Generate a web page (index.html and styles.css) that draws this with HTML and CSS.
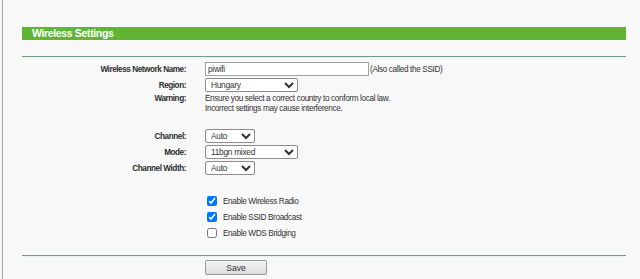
FILE: index.html
```html
<!DOCTYPE html>
<html lang="en">
<head>
  <meta charset="UTF-8" />
  <title>Wireless Settings</title>
  <link rel="stylesheet" href="styles.css">
</head>
<body>
  <div class="frame">
    <div class="title-bar">Wireless Settings</div>
    <div class="rule"></div>

    <form class="settings" onsubmit="return false">
      <div class="row">
        <label class="label" for="ssid">Wireless Network Name:</label>
        <div class="field">
          <input type="text" id="ssid" class="text-input" value="piwifi">
          <span class="hint">(Also called the SSID)</span>
        </div>
      </div>

      <div class="row">
        <label class="label" for="region">Region:</label>
        <div class="field">
          <select id="region" class="sel wide">
            <option>Hungary</option>
          </select>
        </div>
      </div>

      <div class="row warning">
        <span class="label">Warning:</span>
        <div class="field note">
          Ensure you select a correct country to conform local law.<br>
          Incorrect settings may cause interference.
        </div>
      </div>

      <div class="row first-radio">
        <label class="label" for="channel">Channel:</label>
        <div class="field">
          <select id="channel" class="sel narrow"><option>Auto</option></select>
        </div>
      </div>

      <div class="row">
        <label class="label" for="mode">Mode:</label>
        <div class="field">
          <select id="mode" class="sel wide"><option>11bgn mixed</option></select>
        </div>
      </div>

      <div class="row">
        <label class="label" for="width">Channel Width:</label>
        <div class="field">
          <select id="width" class="sel narrow"><option>Auto</option></select>
        </div>
      </div>

      <div class="checks">
        <label class="check"><input type="checkbox" checked> Enable Wireless Radio</label>
        <label class="check"><input type="checkbox" checked> Enable SSID Broadcast</label>
        <label class="check"><input type="checkbox"> Enable WDS Bridging</label>
      </div>
    </form>

    <div class="rule bottom"></div>
    <div class="actions">
      <button type="button" class="btn">Save</button>
    </div>
  </div>
</body>
</html>
```

FILE: styles.css
```css
body {
  margin: 0;
  background: #f8f8f8;
  font-family: 'Liberation Sans', Arial, sans-serif;
  font-size: 8.2px;
  letter-spacing: -0.35px;
  color: #333;
}

.frame {
  margin-left: 2px;
  border-left: 1px solid #a8a8a8;
  height: 279px;
  box-sizing: border-box;
  padding: 27px 0 0 19px;
  width: 624px;
}

.title-bar {
  height: 13px;
  line-height: 13px;
  background: #62b534;
  color: #fff;
  font-weight: bold;
  font-size: 10.5px;
  letter-spacing: -0.35px;
  padding-left: 10px;
}

.rule {
  margin-top: 16px;
  border-top: 1px solid #7a9a88;
  border-bottom: 1px solid #e4f4ea;
}

.settings {
  padding-top: 4px;
}

.row {
  display: grid;
  grid-template-columns: 164px 1fr;
  column-gap: 19px;
  align-items: center;
  margin-bottom: 2px;
}

.label {
  text-align: right;
  font-weight: bold;
  letter-spacing: -0.45px;
  color: #2e2e2e;
}

.field {
  display: flex;
  align-items: center;
}

.text-input {
  box-sizing: border-box;
  width: 164px;
  height: 14px;
  margin: 0;
  padding: 0 2px;
  border: 1px solid #a0a0a0;
  background: #fff;
  font-family: inherit;
  font-size: 8.4px;
  letter-spacing: -0.3px;
  color: #333;
}

.hint {
  margin-left: 1px;
}

.sel {
  box-sizing: border-box;
  height: 14px;
  margin: 0;
  padding: 0 0 0 1px;
  border: 1px solid #8a8a8a;
  border-radius: 2px;
  background: #fff;
  font-family: inherit;
  font-size: 8.4px;
  letter-spacing: -0.3px;
  color: #333;
}

.wide {
  width: 93px;
}

.narrow {
  width: 50px;
}

.warning {
  align-items: start;
  margin-top: 2px;
}

.note {
  display: block;
  line-height: 10px;
}

.first-radio {
  margin-top: 15px;
}

.checks {
  display: flex;
  flex-direction: column;
  margin: 18px 0 0 183px;
}

.check {
  display: flex;
  align-items: center;
  height: 16px;
}

.check input {
  width: 10px;
  height: 10px;
  margin: 0 6px 0 2px;
}

.rule.bottom {
  margin-top: 14px;
}

.actions {
  padding: 3px 0 0 183px;
}

.btn {
  width: 62px;
  height: 15px;
  padding: 0;
  border: 1px solid #999;
  border-radius: 2px;
  background: linear-gradient(#f4f4f4, #dcdcdc);
  font-family: inherit;
  font-size: 8.6px;
  color: #333;
}
```
